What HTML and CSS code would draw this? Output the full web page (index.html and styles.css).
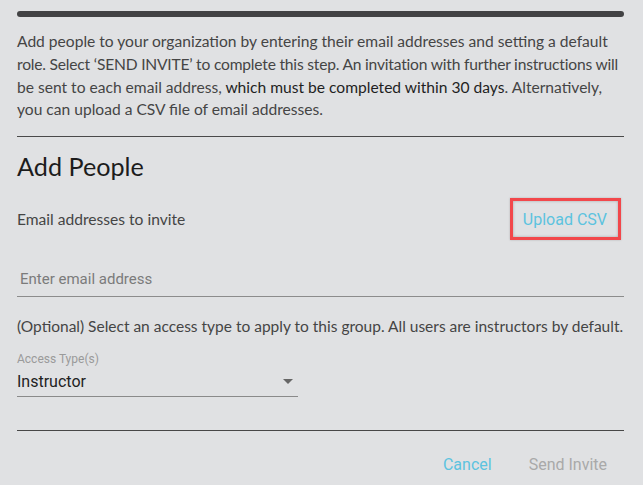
FILE: index.html
```html
<!DOCTYPE html>
<html lang="en">
  <head>
    <meta charset="UTF-8" />
    <meta name="viewport" content="width=device-width, initial-scale=1.0" />
    <title>Add People</title>
    <link rel="stylesheet" href="styles.css">
  </head>
  <body>
    <div class="dialog">
      <div class="progress"></div>

      <p class="intro">
        Add people to your organization by entering their email addresses and setting a default<br />
        <span class="tight">role. Select ‘SEND INVITE’ to complete this step. An invitation with further instructions will</span><br />
        be sent to each email address, <span class="strong">which must be completed within 30 days</span>. Alternatively,<br />
        you can upload a CSV file of email addresses.
      </p>

      <hr class="divider" />

      <h2 class="title">Add People</h2>

      <div class="invite-row">
        <span class="invite-label">Email addresses to invite</span>
        <button class="upload-btn">Upload CSV</button>
      </div>

      <div class="email-field">
        <input type="text" placeholder="Enter email address" />
      </div>

      <p class="optional">(Optional) Select an access type to apply to this group. All users are instructors by default.</p>

      <div class="select-field">
        <label class="select-label">Access Type(s)</label>
        <div class="select-value">
          <span>Instructor</span>
          <svg class="select-arrow" width="10" height="5" viewBox="0 0 10 5">
            <path d="M0 0 L10 0 L5 5 Z" fill="#666" />
          </svg>
        </div>
      </div>

      <hr class="divider divider-bottom" />

      <div class="actions">
        <button class="action-btn cancel">Cancel</button>
        <button class="action-btn send" disabled>Send Invite</button>
      </div>
    </div>
  </body>
</html>
```

FILE: styles.css
```css
* {
  margin: 0;
  padding: 0;
  box-sizing: border-box;
}

body {
  font-family: "Lato", "Open Sans", sans-serif;
  background: #e0e1e3;
  color: #454545;
  width: 643px;
  height: 485px;
  overflow: hidden;
}

.dialog {
  padding: 11px 19px 0 17px;
}

.progress {
  height: 6px;
  border-radius: 3px;
  background: #424244;
}

.intro {
  margin-top: 13px;
  font-size: 15.6px;
  line-height: 22.8px;
  white-space: nowrap;
}

/* caps in Lato run wider than the original face */
.tight {
  letter-spacing: -0.2px;
}

.strong {
  color: #1f1f1f;
}

.divider {
  border: none;
  height: 1px;
  background: #4a4a4a;
  margin-top: 15px;
}

.title {
  margin-top: 15px;
  font-size: 25.2px;
  font-weight: 400;
  line-height: 29px;
  color: #1c1c1c;
}

.invite-row {
  margin-top: 17px;
  display: flex;
  justify-content: space-between;
  align-items: center;
  padding-right: 3px;
}

.invite-label {
  font-size: 15.6px;
}

.upload-btn {
  font-family: "Roboto", sans-serif;
  font-size: 16px;
  color: #5cc3df;
  background: transparent;
  border: 3px solid #f2474b;
  box-shadow: inset 0 0 3px rgba(0, 0, 0, 0.25), 0 0 2px rgba(0, 0, 0, 0.2);
  height: 42px;
  padding: 0 11px 0 10px;
  cursor: pointer;
}

.email-field {
  margin-top: 22px;
  border-bottom: 1px solid #8c8c8c;
}

.email-field input {
  width: 100%;
  height: 34px;
  border: none;
  background: transparent;
  outline: none;
  padding: 0 3px;
  font-family: "Roboto", sans-serif;
  font-size: 15px;
  color: #333;
}

.email-field input::placeholder {
  color: #7b7b7b;
}

.optional {
  margin-top: 18px;
  font-size: 15.5px;
  line-height: 22px;
  white-space: nowrap;
}

.select-field {
  margin-top: 15px;
  width: 281px;
  font-family: "Roboto", sans-serif;
}

.select-label {
  display: block;
  font-size: 12px;
  color: #9a9a9a;
  line-height: 14px;
}

.select-value {
  display: flex;
  justify-content: space-between;
  align-items: center;
  height: 31px;
  padding-right: 5px;
  font-size: 16px;
  color: #222;
  border-bottom: 1px solid #8a8a8a;
}

.divider-bottom {
  margin-top: 33px;
  background: #474747;
}

.actions {
  display: flex;
  justify-content: flex-end;
  gap: 37px;
  margin-top: 24px;
  padding-right: 17px;
}

.action-btn {
  font-family: "Roboto", sans-serif;
  font-size: 16px;
  background: transparent;
  border: none;
  cursor: pointer;
}

.cancel {
  color: #5cc3df;
}

.send {
  color: #a9a9a9;
  cursor: default;
}
```
